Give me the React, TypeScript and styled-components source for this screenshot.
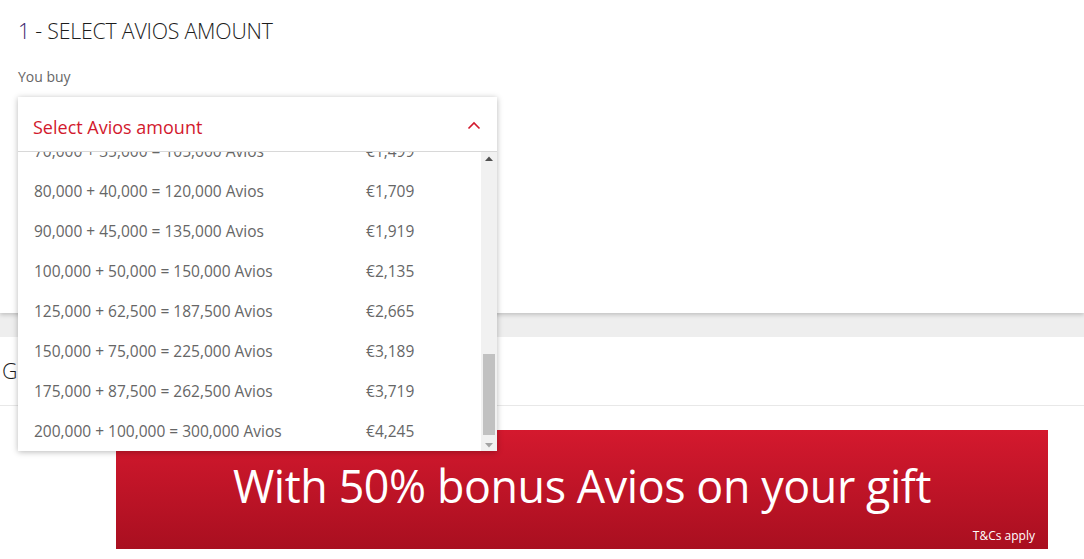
import * as React from 'react'
import styled, {createGlobalStyle} from 'styled-components'

const GlobalStyle = createGlobalStyle`
  body {
    margin: 0;
    background: #fff;
    font-family: 'Open Sans', 'Liberation Sans', sans-serif;
    color: #333;
  }
`

// Avios options shown in the list
const amounts = [
  2000, 4000, 5000, 6000, 8000, 10000, 12000, 15000, 18000, 20000, 25000,
  30000, 35000, 40000, 45000, 50000, 60000, 70000, 80000, 90000, 100000,
  125000, 150000, 175000, 200000,
]
const knownPrices: Record<number, number> = {
  70000: 1499,
  80000: 1709,
  90000: 1919,
  100000: 2135,
  125000: 2665,
  150000: 3189,
  175000: 3719,
  200000: 4245,
}
const fmt = (n: number) => n.toLocaleString('en-GB')
const priceOf = (n: number) => knownPrices[n] ?? Math.round(n * 0.0214 + 3)

const Page = styled.div`
  display: flex;
  flex-direction: column;
  min-height: 559px;
`

const TopSection = styled.section`
  position: relative;
  z-index: 2;
  height: 313px;
  box-sizing: border-box;
  padding: 16px 18px 0;
  background: #fff;
  box-shadow: 0 2px 4px rgba(0, 0, 0, 0.18);
`

const Heading = styled.h2`
  margin: 0;
  font-size: 21.3px;
  line-height: 30px;
  font-weight: 300;
  color: #1c1c1c;
  letter-spacing: -0.2px;
`

const StepNo = styled.span`
  color: #3a1f6b;
`

const Label = styled.div`
  margin-top: 21px;
  font-size: 14px;
  line-height: 20px;
  color: #666;
`

const SelectWrap = styled.div`
  position: relative;
  margin-top: 10px;
  width: 479px;
  height: 55px;
`

const Panel = styled.div`
  position: absolute;
  top: 0;
  left: 0;
  right: 0;
  z-index: 5;
  background: #fff;
  box-shadow: 0 1px 6px rgba(0, 0, 0, 0.28);
`

const SelectHeader = styled.div`
  display: flex;
  align-items: center;
  justify-content: space-between;
  height: 55px;
  padding: 5px 15px 0;
  box-sizing: border-box;
  border-bottom: 1px solid #d8d8d8;
  font-size: 18px;
  color: #d2192d;
`

const ListBody = styled.div`
  display: flex;
  height: 299px;
`

const Viewport = styled.div`
  flex: 1;
  overflow: hidden;
`

const Row = styled.div`
  display: grid;
  grid-template-columns: 332px 1fr;
  height: 40px;
  align-items: center;
  padding-left: 16px;
  font-size: 15.5px;
  color: #666;
`

// fake classic scrollbar, since headless browsers hide the real one
const ScrollBar = styled.div`
  width: 16px;
  display: flex;
  flex-direction: column;
  background: #f1f1f1;
`

const ArrowBtn = styled.div<{$dim?: boolean}>`
  height: 12px;
  display: flex;
  align-items: center;
  justify-content: center;
  color: ${({$dim}) => ($dim ? '#a3a3a3' : '#505050')};
`

const Track = styled.div`
  position: relative;
  flex: 1;
`

const Thumb = styled.div`
  position: absolute;
  left: 2px;
  right: 2px;
  background: #c1c1c1;
`

const Band = styled.div`
  height: 24px;
  background: #eee;
`

const SecondHead = styled.div`
  display: flex;
  align-items: center;
  height: 68px;
  padding-left: 2px;
  border-bottom: 1px solid #e8e8e8;
`

const BannerArea = styled.div`
  padding: 24px 0 0 116px;
`

const Banner = styled.div`
  position: relative;
  width: 932px;
  height: 119px;
  display: flex;
  align-items: center;
  justify-content: center;
  background: linear-gradient(#d4192e, #a90f20);
  color: #fff;
`

const BannerText = styled.div`
  font-size: 44.8px;
  letter-spacing: -0.4px;
  margin-top: -8px;
`

const Terms = styled.span`
  position: absolute;
  right: 13px;
  bottom: 5px;
  font-size: 12px;
`

function Chevron() {
  return (
    <svg width="14" height="9" viewBox="0 0 14 9" style={{marginRight: 1, marginTop: -3}}>
      <path d="M1.5 7.5 L7 2 L12.5 7.5" fill="none" stroke="#d2192d" strokeWidth="1.6" />
    </svg>
  )
}

function Triangle({up}: {up?: boolean}) {
  return (
    <svg width="8" height="5" viewBox="0 0 8 5">
      <path d={up ? 'M0 5 L4 0.5 L8 5 Z' : 'M0 0 L8 0 L4 4.5 Z'} fill="currentColor" />
    </svg>
  )
}

export default function App() {
  const viewRef = React.useRef<HTMLDivElement>(null)
  const trackRef = React.useRef<HTMLDivElement>(null)
  const [thumb, setThumb] = React.useState({top: 0, height: 0})

  React.useLayoutEffect(() => {
    const el = viewRef.current
    const track = trackRef.current
    if (!el || !track) return
    el.scrollTop = el.scrollHeight
    const len = track.clientHeight - 4
    const height = Math.round((el.clientHeight / el.scrollHeight) * len)
    const top = Math.round(
      (el.scrollTop / (el.scrollHeight - el.clientHeight)) * (len - height),
    )
    setThumb({top, height})
  }, [])

  return (
    <Page>
      <GlobalStyle />
      <TopSection>
        <Heading>
          <StepNo>1</StepNo> - SELECT AVIOS AMOUNT
        </Heading>
        <Label>You buy</Label>
        <SelectWrap>
          <Panel>
            <SelectHeader>
              <span>Select Avios amount</span>
              <Chevron />
            </SelectHeader>
            <ListBody>
              <Viewport ref={viewRef}>
                {amounts.map(a => (
                  <Row key={a}>
                    <span>
                      {fmt(a)} + {fmt(a / 2)} = {fmt(a * 1.5)} Avios
                    </span>
                    <span>€{fmt(priceOf(a))}</span>
                  </Row>
                ))}
              </Viewport>
              <ScrollBar>
                <ArrowBtn>
                  <Triangle up />
                </ArrowBtn>
                <Track ref={trackRef}>
                  <Thumb style={{top: thumb.top, height: thumb.height}} />
                </Track>
                <ArrowBtn $dim>
                  <Triangle />
                </ArrowBtn>
              </ScrollBar>
            </ListBody>
          </Panel>
        </SelectWrap>
      </TopSection>
      <Band />
      <SecondHead>
        <Heading>Gift recipient</Heading>
      </SecondHead>
      <BannerArea>
        <Banner>
          <BannerText>With 50% bonus Avios on your gift</BannerText>
          <Terms>T&amp;Cs apply</Terms>
        </Banner>
      </BannerArea>
    </Page>
  )
}
